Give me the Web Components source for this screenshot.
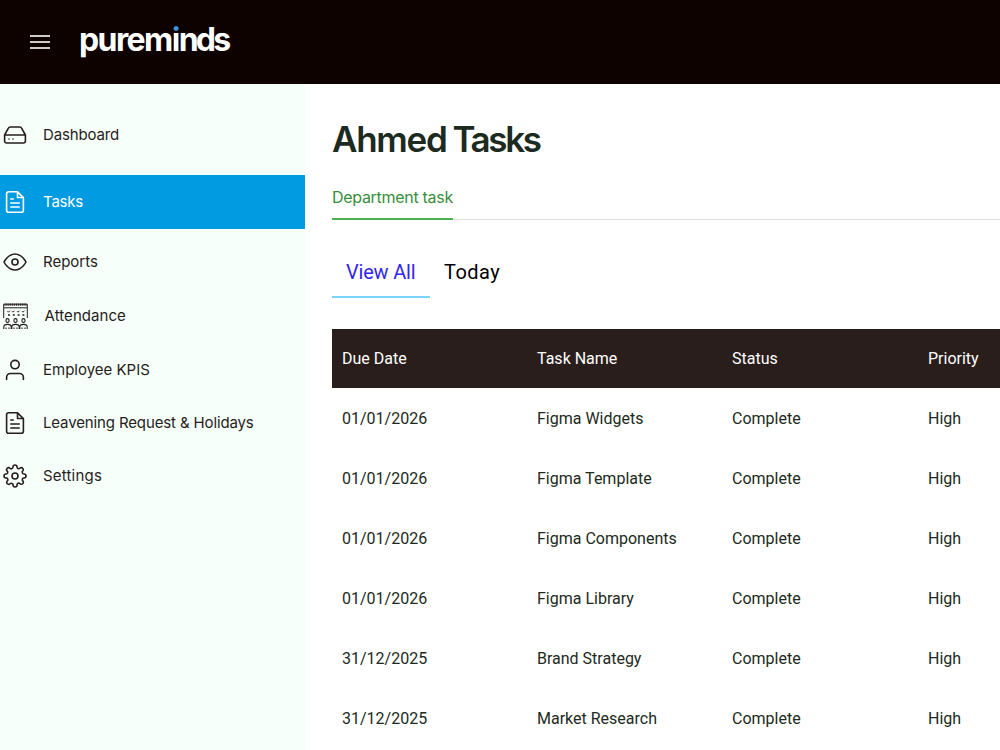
<!DOCTYPE html>
<html lang="en">
<head>
<meta charset="utf-8">
<title>Ahmed Tasks</title>
<style>
body {
    margin: 0;
    height: 750px;
    overflow: hidden;
    background: #fff;
    font-family: Inter, "Liberation Sans", sans-serif;
}
</style>
</head>
<body>
<task-app></task-app>

<script>
const ICONS = {
    drive: `<path d="M22.4 12H1.6m3.8-6.9L1.6 12v6a2 2 0 0 0 2 2h16.8a2 2 0 0 0 2-2v-6l-3.8-6.9A2 2 0 0 0 16.8 4H7.2a2 2 0 0 0-1.8 1.1zM6 16h.01M10 16h.01"/>`,
    file: `<path d="M14.5 1.8H5.6a2 2 0 0 0-2 2v16.4a2 2 0 0 0 2 2h12.8a2 2 0 0 0 2-2V7.5zM14.5 2v5.5h5.7M16.2 13H7.8M16.2 17H7.8M10.2 9H7.8"/>`,
    eye: `<path d="M1 12s4-8 11-8 11 8 11 8-4 8-11 8-11-8-11-8z"/><circle cx="12" cy="12" r="3"/>`,
    user: `<path d="M20.4 21.5v-2a4 4 0 0 0-4-4H7.6a4 4 0 0 0-4 4v2"/><circle cx="12" cy="6.6" r="4.2"/>`,
    gear: `<circle cx="12" cy="12" r="3"/><path d="M19.4 15a1.65 1.65 0 0 0 .33 1.82l.06.06a2 2 0 1 1-2.83 2.83l-.06-.06a1.65 1.65 0 0 0-2.8 1.17V21a2 2 0 0 1-4 0v-.09A1.65 1.65 0 0 0 9 19.4a1.65 1.65 0 0 0-1.82.33l-.06.06a2 2 0 1 1-2.83-2.83l.06-.06A1.65 1.65 0 0 0 3.09 14H3a2 2 0 0 1 0-4h.09A1.65 1.65 0 0 0 4.6 9a1.65 1.65 0 0 0-.33-1.82l-.06-.06a2 2 0 1 1 2.83-2.83l.06.06A1.65 1.65 0 0 0 9 4.6a1.65 1.65 0 0 0 1-1.51V3a2 2 0 0 1 4 0v.09a1.65 1.65 0 0 0 2.8 1.17l.06-.06a2 2 0 1 1 2.83 2.83l-.06.06A1.65 1.65 0 0 0 19.4 9a1.65 1.65 0 0 0 1.51 1H21a2 2 0 0 1 0 4h-.09a1.65 1.65 0 0 0-1.51 1z"/>`,
    menu: `<path d="M2 6h20M2 12h20M2 18h20"/>`,
    class: `<path d="M.7 15V1.2h23.6V15M1 4.8h23" stroke-width="1"/>
        <path d="M1.5 1.7h22" stroke-width="2.2" stroke-dasharray="1.1 .8"/>
        <path d="M4.5 8.2l1 1 1.5-1.5M9 8.2l1 1 1.5-1.5M14 8.2l1 1 1.5-1.5M19 8.2l1 1 1.5-1.5" stroke-width="1"/>
        <path d="M5 12h2M9.8 12h2M14.6 12h2M19.4 12h2" stroke-width="1.6"/>
        <g stroke-width="1.1"><rect x="3" y="15.6" width="3" height="3.8" rx="1.4"/><rect x="11" y="15.6" width="3" height="3.8" rx="1.4"/><rect x="19" y="15.6" width="3" height="3.8" rx="1.4"/>
        <path d="M.8 26v-2.2q0-2.4 3.7-2.4t3.7 2.4V26M8.8 26v-2.2q0-2.4 3.7-2.4t3.7 2.4V26M16.8 26v-2.2q0-2.4 3.7-2.4t3.7 2.4V26M3 24.5V26M6 24.5V26M11 24.5V26M14 24.5V26M19 24.5V26M22 24.5V26"/></g>`
};

class UiIcon extends HTMLElement {
    connectedCallback() {
        const name = this.getAttribute("name");
        const box = name === "class" ? "0 0 25 26" : "0 0 24 24";
        this.attachShadow({ mode: "open" }).innerHTML = `
<style>
:host { display: block; flex: none; width: 24px; height: 24px; }
:host([name="class"]) { width: 25px; height: 26px; }
svg { display: block; width: 100%; height: 100%; fill: none; stroke: currentColor; stroke-width: 1.6; stroke-linecap: round; stroke-linejoin: round; }
:host([name="class"]) svg, :host([name="menu"]) svg { stroke-linecap: butt; }
:host([name="menu"]) svg { stroke-width: 1.8; }
</style>
<svg viewBox="${box}">${ICONS[name]}</svg>`;
    }
}

class BrandLogo extends HTMLElement {
    connectedCallback() {
        this.attachShadow({ mode: "open" }).innerHTML = `
<style>
:host { display: block; color: #fff; font-size: 32px; font-weight: 700; line-height: 40px; letter-spacing: -1.6px; white-space: nowrap; }
span { color: transparent; background: linear-gradient(#3c94dc 12px, #fff 12px); background-clip: text; -webkit-background-clip: text; }
i { font-style: normal; letter-spacing: -2.8px; }
</style>purem<span>i</span><i>nds</i>`;
    }
}

class TopBar extends HTMLElement {
    connectedCallback() {
        this.attachShadow({ mode: "open" }).innerHTML = `
<style>
:host { display: flex; align-items: center; height: 84px; box-sizing: border-box; padding-left: 28px; background: #0d0200; color: #d0cbc9; }
ui-icon { margin-right: 27px; }
brand-logo { margin-top: -5px; }
</style>
<ui-icon name="menu"></ui-icon><brand-logo></brand-logo>`;
    }
}

class NavItem extends HTMLElement {
    connectedCallback() {
        this.attachShadow({ mode: "open" }).innerHTML = `
<style>
:host { display: flex; align-items: center; gap: 16px; box-sizing: border-box; height: 54px; padding: 0 0 1px 3px; color: #271d1c; font-size: 15px; letter-spacing: var(--track, 0); white-space: nowrap; }
:host([active]) { background: #009be1; color: #fff; }
:host([icon="class"]) { gap: 16.6px; }
</style>
<ui-icon name="${this.getAttribute("icon")}"></ui-icon><slot></slot>`;
    }
}

class SideNav extends HTMLElement {
    connectedCallback() {
        this.attachShadow({ mode: "open" }).innerHTML = `
<style>
:host { display: block; box-sizing: border-box; width: 305px; padding-top: 24px; background: #f6fffa; }
</style>
<slot></slot>`;
    }
}

class PageTabs extends HTMLElement {
    connectedCallback() {
        this.attachShadow({ mode: "open" }).innerHTML = `
<style>
:host { display: block; }
.section { display: flex; height: 43px; border-bottom: 1px solid #dcdddc; }
.section b { box-sizing: border-box; width: 121px; height: 44px; padding-top: 11px; border-bottom: 2px solid #4caf50; color: #388e3c; font-weight: 400; font-size: 16px; line-height: 20px; letter-spacing: -.3px; white-space: nowrap; }
.filters { display: flex; margin-top: 26px; font: 20px/26px Roboto, sans-serif; color: #000; }
.filters span { box-sizing: border-box; height: 52px; padding: 13px 14px 0; border-bottom: 2px solid transparent; letter-spacing: .45px; white-space: nowrap; }
.filters .on { width: 98px; color: #3325f0; border-color: #7bd3ff; letter-spacing: -.2px; }
</style>
<div class="section"><b>Department task</b></div>
<div class="filters"><span class="on">View All</span><span>Today</span></div>`;
    }
}

class TaskTable extends HTMLElement {
    connectedCallback() {
        const rows = [
            ["01/01/2026", "Figma Widgets"],
            ["01/01/2026", "Figma Template"],
            ["01/01/2026", "Figma Components"],
            ["01/01/2026", "Figma Library"],
            ["31/12/2025", "Brand Strategy"],
            ["31/12/2025", "Market Research"]
        ];
        this.attachShadow({ mode: "open" }).innerHTML = `
<style>
:host { display: block; width: 782px; font: 16px/20px Roboto, sans-serif; color: #1c2a20; }
.row { display: grid; grid-template-columns: 195px 195px 196px 196px; align-items: center; height: 60px; }
.head { height: 59px; margin-bottom: 1px; background: #291e1c; color: #fff; }
.row span { padding-left: 10px; white-space: nowrap; }
</style>
<div class="row head"><span>Due Date</span><span>Task Name</span><span>Status</span><span>Priority</span></div>
${rows.map(([date, task]) => `<div class="row"><span>${date}</span><span>${task}</span><span>Complete</span><span>High</span></div>`).join("")}`;
    }
}

class TaskApp extends HTMLElement {
    connectedCallback() {
        this.attachShadow({ mode: "open" }).innerHTML = `
<style>
:host { display: block; height: 750px; overflow: hidden; }
.body { display: grid; grid-template-columns: 305px 1fr; height: 666px; }
main { min-width: 0; padding: 33px 0 0 27px; overflow: hidden; }
h1 { margin: 0 0 15px; font-size: 35px; line-height: 44px; font-weight: 600; letter-spacing: -1.3px; word-spacing: -1.5px; color: #1d2a1f; white-space: nowrap; }
h1 span { letter-spacing: -2.4px; }
task-table { margin-top: 31px; }
.first { margin-bottom: 13px; --track: -.15px; }
.tasks { margin-bottom: 6px; --track: -.2px; }
.attendance { --track: .05px; }
.leave { height: 53px; margin-top: -.5px; --track: -.13px; }
.settings { height: 53px; --track: .2px; }
</style>
<top-bar></top-bar>
<div class="body">
    <side-nav>
        <nav-item class="first" icon="drive">Dashboard</nav-item>
        <nav-item class="tasks" icon="file" active>Tasks</nav-item>
        <nav-item icon="eye">Reports</nav-item>
        <nav-item class="attendance" icon="class">Attendance</nav-item>
        <nav-item icon="user">Employee KPIS</nav-item>
        <nav-item class="leave" icon="file">Leavening Request &amp; Holidays</nav-item>
        <nav-item class="settings" icon="gear">Settings</nav-item>
    </side-nav>
    <main>
        <h1>Ahmed <span>Tasks</span></h1>
        <page-tabs></page-tabs>
        <task-table></task-table>
    </main>
</div>`;
    }
}

customElements.define("ui-icon", UiIcon);
customElements.define("brand-logo", BrandLogo);
customElements.define("top-bar", TopBar);
customElements.define("nav-item", NavItem);
customElements.define("side-nav", SideNav);
customElements.define("page-tabs", PageTabs);
customElements.define("task-table", TaskTable);
customElements.define("task-app", TaskApp);
</script>
</body>
</html>
